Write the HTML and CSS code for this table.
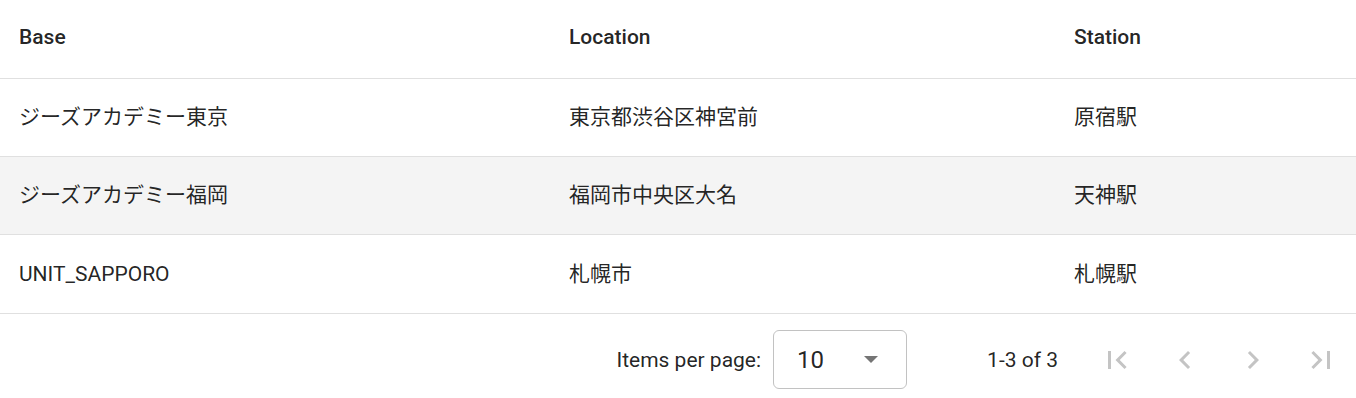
FILE: index.html
```html
<!DOCTYPE html>
<html lang="ja">
<head>
<meta charset="utf-8">
<title>Bases</title>
<link rel="stylesheet" href="styles.css">
</head>
<body>
<div class="table-wrap">
  <table class="data-table">
    <colgroup>
      <col class="col-base">
      <col class="col-location">
      <col class="col-station">
    </colgroup>
    <thead>
      <tr class="header-row">
        <th>Base</th>
        <th>Location</th>
        <th>Station</th>
      </tr>
    </thead>
    <tbody>
      <tr class="data-row">
        <td>ジーズアカデミー東京</td>
        <td>東京都渋谷区神宮前</td>
        <td>原宿駅</td>
      </tr>
      <tr class="data-row hovered">
        <td>ジーズアカデミー福岡</td>
        <td>福岡市中央区大名</td>
        <td>天神駅</td>
      </tr>
      <tr class="data-row last-row">
        <td>UNIT_SAPPORO</td>
        <td>札幌市</td>
        <td>札幌駅</td>
      </tr>
    </tbody>
  </table>
  <div class="paginator">
    <span class="page-size-label">Items per page:</span>
    <div class="page-size-select">
      <span class="select-value">10</span>
      <span class="select-arrow"></span>
    </div>
    <span class="range-label">1-3 of 3</span>
    <div class="nav-buttons">
      <button class="nav-btn" disabled aria-label="First page">
        <svg viewBox="0 0 24 24"><path d="M18.41 16.59L13.82 12l4.59-4.59L17 6l-6 6 6 6zM6 6h2v12H6z"/></svg>
      </button>
      <button class="nav-btn" disabled aria-label="Previous page">
        <svg viewBox="0 0 24 24"><path d="M15.41 7.41L14 6l-6 6 6 6 1.41-1.41L10.83 12z"/></svg>
      </button>
      <button class="nav-btn" disabled aria-label="Next page">
        <svg viewBox="0 0 24 24"><path d="M10 6L8.59 7.41 13.17 12l-4.58 4.59L10 18l6-6z"/></svg>
      </button>
      <button class="nav-btn" disabled aria-label="Last page">
        <svg viewBox="0 0 24 24"><path d="M5.59 7.41L10.18 12l-4.59 4.59L7 18l6-6-6-6zM16 6h2v12h-2z"/></svg>
      </button>
    </div>
  </div>
</div>
</body>
</html>
```
FILE: styles.css
```css
html, body {
  margin: 0;
  padding: 0;
  background: #ffffff;
}

body {
  font-family: Roboto, "Noto Sans CJK JP", "Noto Sans", sans-serif;
  color: rgba(0, 0, 0, 0.87);
  overflow: hidden;
}

.table-wrap {
  width: 1356px;
}

.data-table {
  width: 100%;
  border-collapse: collapse;
  table-layout: fixed;
}

.col-base { width: 550px; }
.col-location { width: 505px; }

.header-row th {
  height: 78px;
  padding: 0 0 4px 19px;
  text-align: left;
  font-size: 21px;
  line-height: 24px;
  font-weight: 500;
  color: rgba(0, 0, 0, 0.87);
  border-bottom: 1px solid #e0e0e0;
  box-sizing: border-box;
  vertical-align: middle;
}

.data-row td {
  height: 78px;
  padding: 0 0 0 19px;
  font-size: 21px;
  line-height: 24px;
  font-weight: 400;
  color: rgba(0, 0, 0, 0.87);
  border-bottom: 1px solid #e0e0e0;
  box-sizing: border-box;
  vertical-align: middle;
}

.data-row.last-row td {
  height: 79px;
}

.data-row.hovered td {
  background: #f4f4f4;
}

.paginator {
  height: 92px;
  display: flex;
  align-items: center;
  justify-content: flex-end;
  padding-right: 1px;
  font-size: 21px;
  color: rgba(0, 0, 0, 0.87);
}

.page-size-label {
  margin-right: 12px;
}

.page-size-select {
  width: 134px;
  height: 59px;
  box-sizing: border-box;
  border: 1px solid #c2c2c2;
  border-radius: 6px;
  display: flex;
  align-items: center;
  justify-content: space-between;
  padding: 0 28px 0 23px;
}

.select-value {
  font-size: 24px;
  color: rgba(0, 0, 0, 0.87);
}

.select-arrow {
  width: 0;
  height: 0;
  border-left: 7.5px solid transparent;
  border-right: 7.5px solid transparent;
  border-top: 7.5px solid #757575;
}

.range-label {
  margin-left: 80px;
  margin-right: 25px;
}

.nav-buttons {
  display: flex;
}

.nav-btn {
  width: 68px;
  height: 68px;
  border: none;
  background: transparent;
  padding: 0;
  display: flex;
  align-items: center;
  justify-content: center;
}

.nav-btn svg {
  width: 36px;
  height: 36px;
  fill: #c4c4c4;
}
```
